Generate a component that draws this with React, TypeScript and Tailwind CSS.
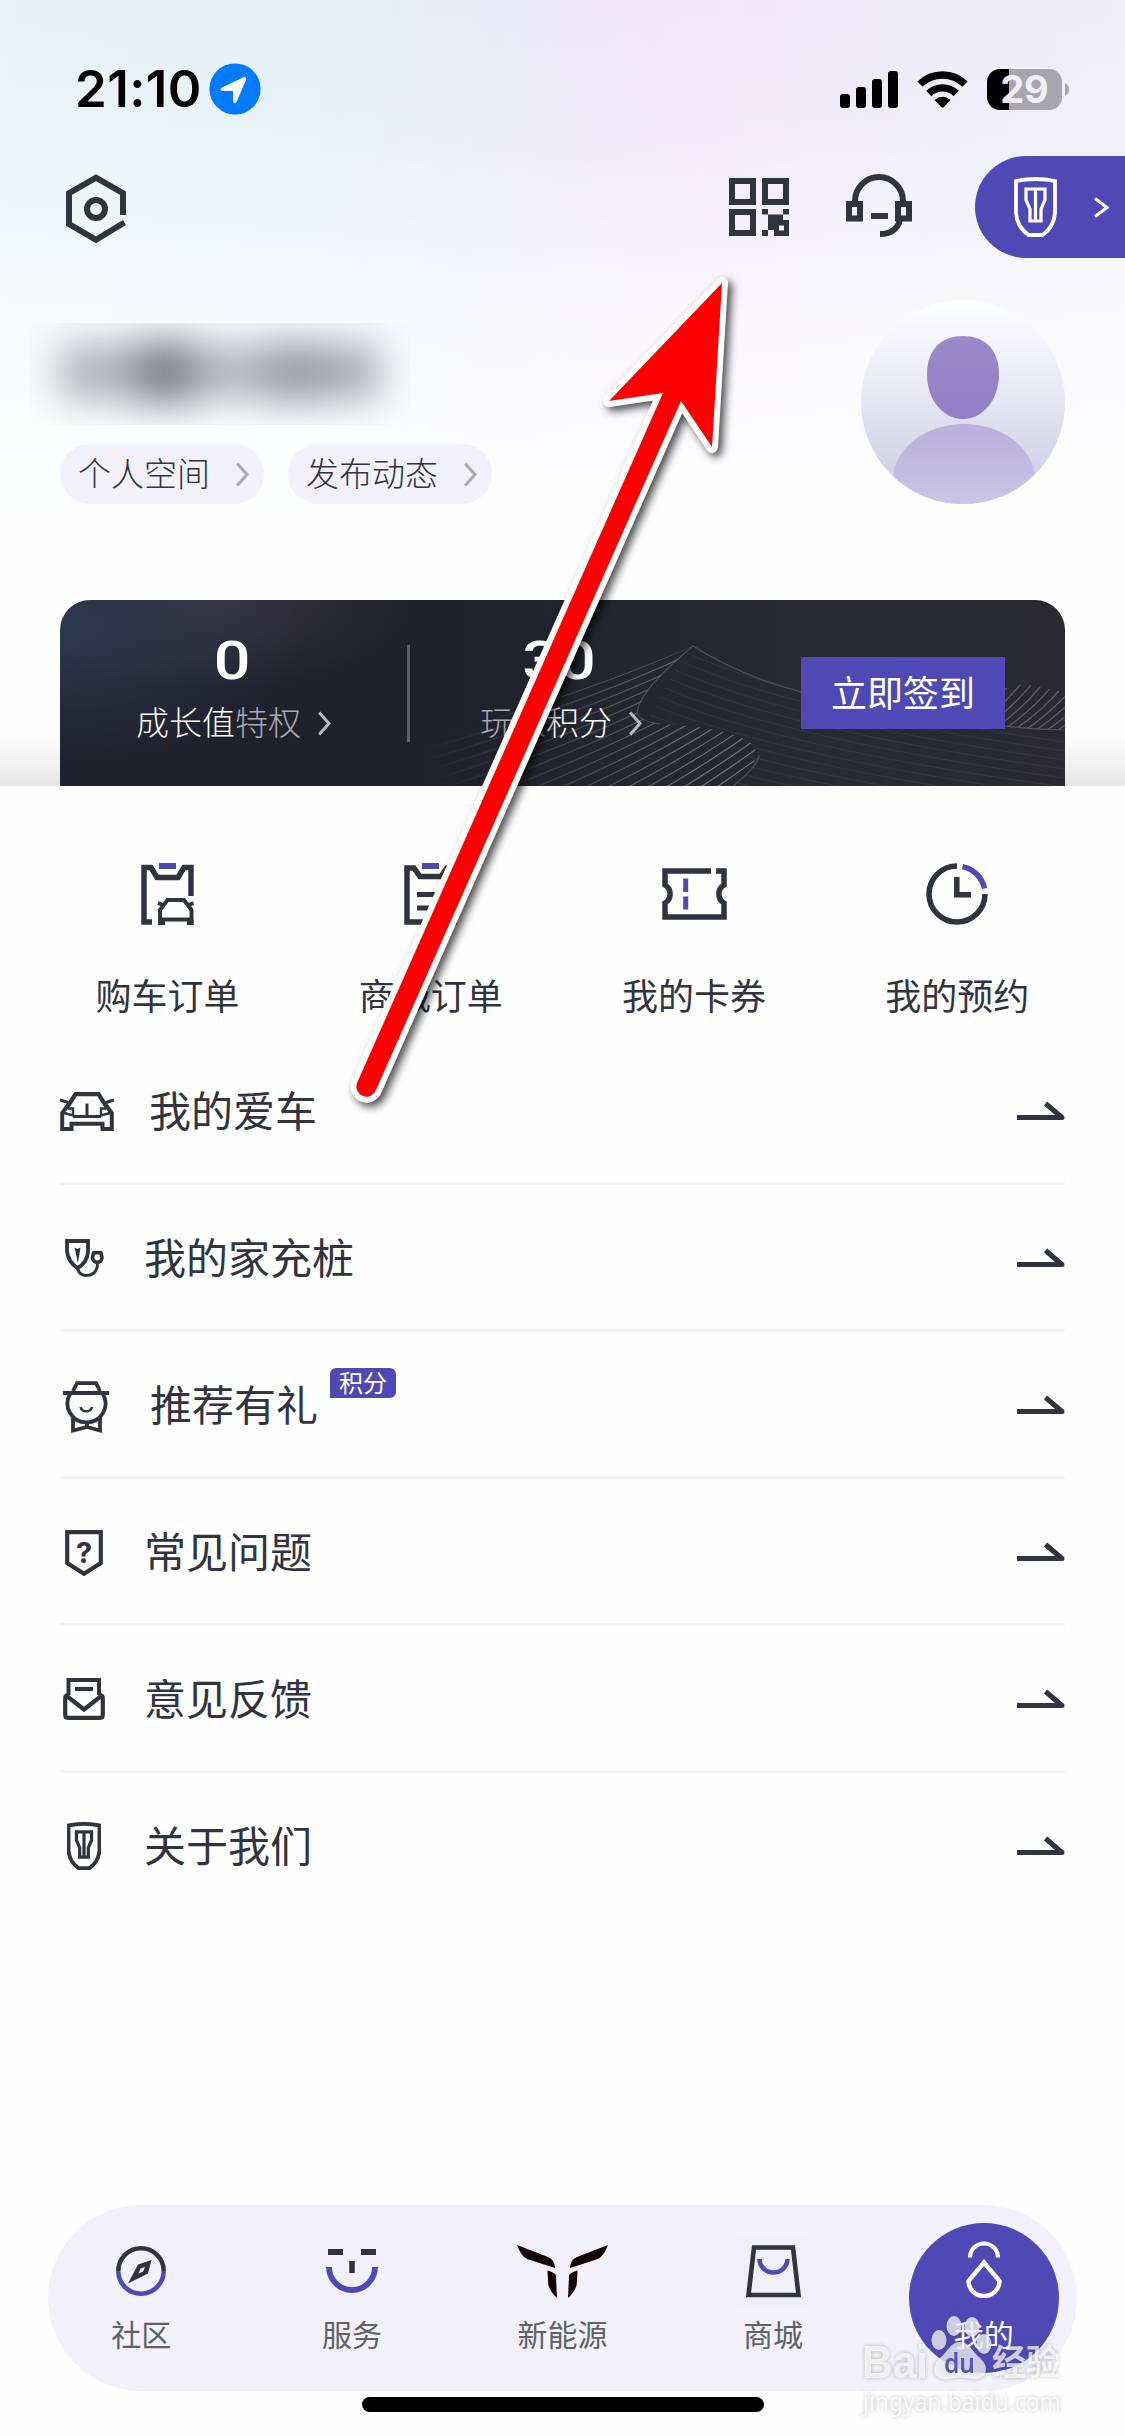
import React from "react";

const INK = "#31333e";
const VIOLET = "#4f49b5";

function Svg({ w, h, className, children }: { w: number; h: number; className?: string; children: React.ReactNode }) {
  return (
    <svg width={w} height={h} viewBox={`0 0 ${w} ${h}`} fill="none" className={className ?? "shrink-0"}>
      {children}
    </svg>
  );
}

/* ---------- status bar ---------- */

function StatusBar() {
  return (
    <div className="flex h-[156px] items-start justify-between pt-[63px] pl-[75px] pr-[56px]">
      <div className="flex h-[52px] items-center">
        <span className="w-[134px] font-['Inter'] text-[51px] font-semibold leading-[52px] tracking-[0.4px] text-black">21:10</span>
        <Svg w={52} h={52}>
          <circle cx="26" cy="26" r="25.6" fill="#007aff" />
          <path d="M13 24.5 L34 14.5 Q38 13 37 17 L27.5 39 Q25 42 24 38 V28 H14 Q9.500 27 13 24.500Z" fill="#fff" />
        </Svg>
      </div>
      <div className="flex h-[52px] items-center">
        <Svg w={58} h={37}>
          <rect x="0" y="23" width="10" height="14" rx="3" fill="#000" />
          <rect x="16" y="16" width="10" height="21" rx="3" fill="#000" />
          <rect x="32" y="8" width="10" height="29" rx="3" fill="#000" />
          <rect x="48" y="0" width="10" height="37" rx="3" fill="#000" />
        </Svg>
        <Svg w={51} h={37} className="ml-[19px] shrink-0">
          <path d="M3 13.200 A32 32 0 0 1 48 13.200" stroke="#000" strokeWidth="7.400" />
          <path d="M11.800 22.500 A19.500 19.500 0 0 1 39.200 22.500" stroke="#000" strokeWidth="7.400" />
          <path d="M17.500 29 Q25.500 22.500 33.500 29 L26.500 36.300 Q25.500 37.200 24.500 36.300Z" fill="#000" />
        </Svg>
        <div className="ml-[19px] flex h-[41px] w-[75px] items-center justify-center rounded-[13px] bg-[linear-gradient(90deg,#000_29.5%,#a7a5ad_29.5%)]">
          <span className="font-['Inter'] text-[38px] font-bold leading-none text-[#f1eefb]">29</span>
        </div>
        <Svg w={4} h={13} className="ml-[3px] shrink-0">
          <path d="M0 0 Q4 2 4 6.500 Q4 11 0 13Z" fill="#a7a5ad" />
        </Svg>
      </div>
    </div>
  );
}

/* ---------- header ---------- */

function Shield({ w, h, color, width }: { w: number; h: number; color: string; width: number }) {
  return (
    <svg width={w} height={h} viewBox="0 0 43 60" fill="none" stroke={color} strokeWidth={width} className="shrink-0">
      <path d="M2 4 Q21.500 0 41 4 V36 Q40 50 28.500 58 H14.500 Q3 50 2 36Z" />
      <path d="M12 12 H31 V23 L27 32 V44 H16 V32 L12 23Z M21.500 12 V44" strokeWidth={width * 0.85} />
    </svg>
  );
}

function Header() {
  return (
    <div className="flex h-[102px] items-center pl-[66px]">
      <Svg w={60} h={70} className="mt-[3px] shrink-0">
        <path d="M57 41 V19.200 L30 3.600 L3 19.200 V50 L30 65.800 L58.500 48.500" stroke={INK} strokeWidth="6" />
        <circle cx="30" cy="35" r="9" stroke={INK} strokeWidth="6" />
      </Svg>
      <Svg w={60} h={58} className="ml-[603px] shrink-0">
        <path d="M3 3H24V24H3Z M36 3H57V24H36Z M3 34H24V55H3Z" stroke={INK} strokeWidth="6" />
        <path
          fillRule="evenodd"
          fill={INK}
          d="M33 31h6v5.500h-6z M54 31h6v5.500h-6z M39 36.500h15v5.500h-9v10h-6z M45 42h15v16h-15z M50 47.500v5h5v-5z M33 52h6v6h-6z"
        />
      </Svg>
      <Svg w={66} h={63} className="mb-[3px] ml-[57px] shrink-0">
        <path d="M9 28 V27 A24 24 0 0 1 57 27 V28" stroke={INK} strokeWidth="6" />
        <path d="M3 30H14V44.500H3Z M52 30H63V44.500H52Z" stroke={INK} strokeWidth="6" />
        <path d="M25 42 H42" stroke={INK} strokeWidth="6" />
        <path d="M54 46 Q50 60 34 60" stroke={INK} strokeWidth="6" />
      </Svg>
      <div className="ml-[63px] flex h-[102px] w-[150px] items-center rounded-l-full bg-[#4f49b5] pl-[39px]">
        <Shield w={43} h={60} color="#fff" width={3.8} />
        <Svg w={15} h={21} className="ml-[37px] shrink-0">
          <path d="M1 1.500 L13 10.500 L1 19.500" stroke="#fff" strokeWidth="3" />
        </Svg>
      </div>
    </div>
  );
}

function Chevron({ color }: { color: string }) {
  return (
    <Svg w={13} h={25}>
      <path d="M1.200 1.500 L11 12.500 L1.200 23.500" stroke={color} strokeWidth="3" />
    </Svg>
  );
}

function Chip({ label }: { label: string }) {
  return (
    <div className="flex h-[60px] w-[204px] items-center justify-between rounded-full bg-[#f2f0fb] pl-[18px] pr-[15px]">
      <span className="pb-1 text-[33px] font-light leading-none text-[#31333e]">{label}</span>
      <Chevron color="#aaaaaf" />
    </div>
  );
}

function Profile() {
  return (
    <div className="mt-[42px] flex h-[204px] justify-between pr-[60px] pl-[30px]">
      <div className="flex flex-col pt-[23px]">
        <div className="flex h-[102px] w-[380px] items-start overflow-hidden pt-[20px] pl-[30px]">
          <div className="flex h-[58px] items-center blur-[19px]">
            <div className="h-[56px] w-[75px] bg-[#b0b3b7]" />
            <div className="h-[62px] w-[60px] bg-[#7d8087]" />
            <div className="h-[54px] w-[70px] bg-[#b3b5b9]" />
            <div className="h-[58px] w-[60px] bg-[#989aa3]" />
            <div className="h-[54px] w-[54px] bg-[#a8a9ae]" />
          </div>
        </div>
        <div className="mt-[19px] ml-[30px] flex gap-6">
          <Chip label="个人空间" />
          <Chip label="发布动态" />
        </div>
      </div>
      <svg width="204" height="204" viewBox="0 0 204 204">
        <defs>
          <linearGradient id="avatarBg" x1="0" y1="0" x2="0" y2="1">
            <stop offset="0" stopColor="#fdfeff" />
            <stop offset="0.350" stopColor="#ededf6" />
            <stop offset="1" stopColor="#cbc8e4" />
          </linearGradient>
          <linearGradient id="avatarBody" x1="0" y1="0" x2="0" y2="1">
            <stop offset="0" stopColor="#b8afdb" />
            <stop offset="1" stopColor="#cbc5e7" />
          </linearGradient>
          <linearGradient id="avatarHead" x1="0" y1="0" x2="0" y2="1">
            <stop offset="0" stopColor="#9a8bcb" />
            <stop offset="1" stopColor="#9180c6" />
          </linearGradient>
          <clipPath id="avatarClip">
            <circle cx="102" cy="102" r="102" />
          </clipPath>
        </defs>
        <g clipPath="url(#avatarClip)">
          <rect width="204" height="204" fill="url(#avatarBg)" />
          <path d="M32 204 V180 A71 56 0 0 1 174 180 V204Z" fill="url(#avatarBody)" />
          <path d="M66 74 C66 48 82 36 102 36 C122 36 138 48 138 74 C138 100 122 119 102 119 C82 119 66 100 66 74Z" fill="url(#avatarHead)" />
        </g>
      </svg>
    </div>
  );
}

/* ---------- membership card ---------- */

const range = (n: number) => Array.from({ length: n }, (_, i) => i);

function Contours() {
  return (
    <svg width="1005" height="186" viewBox="0 0 1005 186" fill="none" className="absolute inset-0">
      <defs>
        <clipPath id="duneLeft">
          <path d="M330 150 Q520 95 633 46 Q580 90 577 112 Q578 121 600 124 Q660 126 690 142 Q708 158 673 186 H330Z" />
        </clipPath>
        <clipPath id="duneMain">
          <path d="M633 46 Q700 88 780 100 Q900 128 1005 130 V186 H673 Q708 158 690 142 Q660 126 600 124 Q578 121 577 112 Q580 90 633 46Z" />
        </clipPath>
        <clipPath id="duneRight">
          <path d="M870 116 Q930 90 965 84 L1005 92 V130 Q920 126 870 116Z" />
        </clipPath>
        <linearGradient id="fadeIn" gradientUnits="userSpaceOnUse" x1="360" y1="0" x2="640" y2="0">
          <stop offset="0" stopColor="#8a8a8c" stopOpacity="0" />
          <stop offset="0.500" stopColor="#8a8a8c" stopOpacity="0.300" />
          <stop offset="1" stopColor="#9a9893" stopOpacity="0.650" />
        </linearGradient>
      </defs>
      <g clipPath="url(#duneLeft)" stroke="url(#fadeIn)" strokeWidth="1.200">
        {range(26).map((i) => (
          <path key={i} d={`M${330 + i * 6} ${148 + i * 9.5} Q${520 + i * 6} ${98 + i * 7.5} ${640 + i * 7} ${42 + i * 4}`} />
        ))}
      </g>
      <g clipPath="url(#duneMain)" stroke="#77777a" strokeOpacity="0.160" strokeWidth="1.200">
        {range(18).map((i) => (
          <path key={i} d={`M${625 - i * 5} ${52 + i * 9} Q${740 - i * 2} ${105 + i * 9} 1005 ${142 + i * 9}`} />
        ))}
      </g>
      <g clipPath="url(#duneRight)" stroke="#8c8a86" strokeOpacity="0.600" strokeWidth="1.200">
        {range(14).map((i) => (
          <path key={i} d={`M${860 + i * 11} 134 Q${895 + i * 11} 112 ${920 + i * 11} 80`} />
        ))}
      </g>
      <path d="M633 46 Q580 90 577 112 Q578 121 600 124 M699 155 Q699 165 673 186 M633 46 Q700 88 790 102 M880 118 Q940 128 1005 130" stroke="#85837f" strokeOpacity="0.450" strokeWidth="1.200" />
    </svg>
  );
}

function Stat({ value, strong, soft, softFirst }: { value: string; strong: string; soft: string; softFirst?: boolean }) {
  const softText = <span className="text-[#aaa9ae]">{soft}</span>;
  return (
    <div className="flex flex-col items-center">
      <span className="mr-[3px] scale-x-[1.22] font-['Roboto'] text-[53px] font-medium leading-[62px] text-white">{value}</span>
      <div className="mt-[8px] flex items-center gap-[17px] text-[33px] font-light leading-[42px] text-white">
        <span>
          {softFirst && softText}
          {strong}
          {!softFirst && softText}
        </span>
        <div className="pt-[5px]">
          <Chevron color="#b9b9bd" />
        </div>
      </div>
    </div>
  );
}

function MemberCard() {
  return (
    <div className="bg-[linear-gradient(180deg,transparent_72%,#e6e6e6_100%)] px-[60px]">
      <div className="relative h-[186px] overflow-hidden rounded-t-[30px] bg-[radial-gradient(ellipse_240px_130px_at_0px_30px,#2d3850_0%,transparent_100%),radial-gradient(ellipse_200px_90px_at_150px_0px,#3a3443_0%,transparent_100%),linear-gradient(90deg,#1f212e_0%,#1f222d_40%,#292a33_75%,#2a2a30_100%)]">
        <Contours />
        <div className="relative flex h-full items-start">
          <div className="flex w-[347px] justify-center pt-[30px]">
            <Stat value="0" strong="成长值" soft="特权" />
          </div>
          <div className="mt-[45px] h-[97px] w-[3px] bg-[#5f6068]" />
          <div className="flex w-[302px] justify-center pt-[30px]">
            <Stat value="30" strong="积分" soft="玩家" softFirst />
          </div>
          <button className="mt-[57px] ml-[89px] h-[72px] w-[204px] bg-[#4f49b5] pb-1 text-[36px] leading-none text-white">立即签到</button>
        </div>
      </div>
    </div>
  );
}

/* ---------- shortcuts ---------- */

const CarOrderIcon = (
  <Svg w={53} h={62}>
    <rect x="18" y="0" width="17" height="6" fill={VIOLET} />
    <path d="M11 59 H3 V4.500 H10 L16 14.500 H37 L43 4.500 H50 V33" stroke={INK} strokeWidth="5.500" />
    <path d="M19 62 V47 L26.500 37 H43 L50.500 47 V62 M19 56.500 H50.500 M17 40 L22 42 M52.500 40 L47.500 42" stroke={INK} strokeWidth="4" />
    <path d="M17 56.500H24V62H17Z M46 56.500H52.500V62H46Z" fill={INK} />
  </Svg>
);

const MallOrderIcon = (
  <Svg w={53} h={62}>
    <rect x="18" y="0" width="17" height="6" fill={VIOLET} />
    <path d="M3 59 V5 H10 L16 13.500 H37 L43 5 H50 V59Z" stroke={INK} strokeWidth="5.500" />
    <path d="M13 31.500 H40 M13 45 H40" stroke={INK} strokeWidth="5" />
  </Svg>
);

const CouponIcon = (
  <Svg w={65} h={52}>
    <path d="M49 3 H3 V17 A10.500 10.500 0 0 1 3 35 V49 H62 V35 A10.500 10.500 0 0 1 62 17 V3 H54" stroke={INK} strokeWidth="5.500" />
    <path d="M23.700 10.500 V24 M23.700 28.500 V41.500" stroke={VIOLET} strokeWidth="5" />
  </Svg>
);

const ClockIcon = (
  <Svg w={62} h={62}>
    <path d="M59 31 A28 28 0 1 1 31 3" stroke={INK} strokeWidth="5.500" />
    <path d="M36.500 3.600 A28 28 0 0 1 58.500 25.500" stroke={VIOLET} strokeWidth="5.500" />
    <path d="M30.800 14 V31.800 H45" stroke={INK} strokeWidth="5.500" />
  </Svg>
);

const shortcuts = [
  { label: "购车订单", icon: CarOrderIcon },
  { label: "商城订单", icon: MallOrderIcon },
  { label: "我的卡券", icon: CouponIcon },
  { label: "我的预约", icon: ClockIcon },
];

function Shortcuts() {
  return (
    <div className="grid h-[252px] grid-cols-4 px-9 pt-[69px]">
      {shortcuts.map((s) => (
        <div key={s.label} className="flex flex-col items-center">
          <div className="flex h-[78px] items-center">{s.icon}</div>
          <span className="mt-[35px] text-[36px] leading-[52px] text-[#31333e]">{s.label}</span>
        </div>
      ))}
    </div>
  );
}

/* ---------- menu ---------- */

const CarIcon = (
  <Svg w={54} h={39}>
    <path d="M8 14 L15.500 2.200 H38.500 L46 14" stroke={INK} strokeWidth="4.200" />
    <path d="M0 8 L8 10.500 M54 8 L46 10.500 M27 11.500 V24 M13 24.500 H41" stroke={INK} strokeWidth="3" />
    <path d="M9 12 L2.200 21 V37 H11.500 V31.800 H42.500 V37 H51.800 V21 L45 12" stroke={INK} strokeWidth="4" />
    <path d="M4 21 L13 23.500 V16.500 H8 M50 21 L41 23.500 V16.500 H46" stroke={INK} strokeWidth="2.400" />
  </Svg>
);

const ChargerIcon = (
  <Svg w={39} h={38}>
    <path d="M2 2 H23 V13 Q22 24 12.500 29 Q3 23 2 12Z" stroke={INK} strokeWidth="3.800" />
    <path d="M9.500 8.500 L12.500 10 L15.500 8.500 L13 24Z" fill={INK} />
    <path d="M12.500 29 Q14 36.500 21.500 36.500 Q32 36 32.500 25" stroke={INK} strokeWidth="3" />
    <path d="M28.500 13.800 H36 L37 18.500 A4.700 4.700 0 0 1 27.500 18.500Z" stroke={INK} strokeWidth="3.600" strokeLinejoin="round" />
  </Svg>
);

const ReferralIcon = (
  <Svg w={46} h={52}>
    <path d="M10 10 L14 2.200 H33 L37 10" stroke={INK} strokeWidth="3.800" />
    <path d="M0 12 H46" stroke={INK} strokeWidth="4.200" />
    <path d="M7 13 A19 19 0 1 0 40 13" stroke={INK} strokeWidth="3.800" />
    <path d="M17.500 26 A6 6 0 0 0 29 26" stroke={INK} strokeWidth="2.600" />
    <path d="M10 35 V49.500 L24 46 L37 49.500 V35 M24 41 V46" stroke={INK} strokeWidth="3.800" />
  </Svg>
);

const FaqIcon = (
  <Svg w={38} h={47}>
    <path d="M2.200 2.200 H35.800 V33 L19 43.700 L2.200 33Z" stroke={INK} strokeWidth="4.200" />
    <text x="19" y="32.500" textAnchor="middle" fontFamily="Inter" fontWeight="700" fontSize="29" fill={INK}>
      ?
    </text>
  </Svg>
);

const FeedbackIcon = (
  <Svg w={42} h={42}>
    <path d="M5.500 17 V2 H36 V17" stroke={INK} strokeWidth="4" />
    <path d="M12 11 H30" stroke={INK} strokeWidth="4.200" />
    <path d="M2.500 17 L21 31.500 L39.500 17" stroke={INK} strokeWidth="4.200" />
    <path d="M6 17 Q2.200 17 2.200 20 V37 Q2.200 39.800 5 39.800 H37 Q39.800 39.800 39.800 37 V20 Q39.800 17 36 17" stroke={INK} strokeWidth="4.200" />
  </Svg>
);

const menu = [
  { label: "我的爱车", icon: CarIcon, slot: "w-[54px]", gap: "ml-[35px]" },
  { label: "我的家充桩", icon: ChargerIcon, slot: "w-[48px]", gap: "ml-[36px]" },
  { label: "推荐有礼", icon: ReferralIcon, slot: "w-[52px] pt-[4px]", gap: "ml-[38px]", badge: "积分" },
  { label: "常见问题", icon: FaqIcon, slot: "w-[48px] pt-[2px]", gap: "ml-[36px]" },
  { label: "意见反馈", icon: FeedbackIcon, slot: "w-[48px]", gap: "ml-[36px]" },
  { label: "关于我们", icon: <Shield w={34} h={48} color={INK} width={4.8} />, slot: "w-[48px]", gap: "ml-[36px]" },
];

function Menu() {
  return (
    <div className="flex flex-col px-[60px]">
      {menu.map((m, i) => (
        <div
          key={m.label}
          className={`flex h-[147px] items-center ${i < menu.length - 1 ? "border-b-[3px] border-[#f3f3f4]" : "border-b-[3px] border-transparent"}`}
        >
          <div className={`mt-[2px] flex justify-center ${m.slot}`}>{m.icon}</div>
          <span className={`pb-[3px] text-[42px] leading-none text-[#31333e] ${m.gap}`}>{m.label}</span>
          {m.badge && (
            <span className="mb-[43px] ml-[12px] flex h-[30px] w-[66px] items-center justify-center rounded-[6px] rounded-bl-none bg-[#4f49b5] pb-[2px] text-[24px] leading-none text-white">
              {m.badge}
            </span>
          )}
          <Svg w={48} h={20} className="mt-[2px] ml-auto shrink-0">
            <path d="M0 16.500 H45 L28.500 2.500" stroke={INK} strokeWidth="5" strokeLinejoin="round" />
          </Svg>
        </div>
      ))}
    </div>
  );
}

/* ---------- tab bar ---------- */

const CompassIcon = (
  <Svg w={50} h={50}>
    <path d="M2.300 25 A22.700 22.700 0 0 1 47.700 25" stroke={INK} strokeWidth="4.500" />
    <path d="M2.300 25 A22.700 22.700 0 0 0 47.700 25" stroke={VIOLET} strokeWidth="4.500" />
    <path fillRule="evenodd" d="M35.500 14 L32 27.500 L12 37.500 L22 18.500Z M29 21 L24.500 22.500 L22.500 27.500 L27 25.500Z" fill={INK} />
  </Svg>
);

const ServiceIcon = (
  <Svg w={52} h={44}>
    <path d="M2 3 H17 M35 3 H50" stroke={INK} strokeWidth="6" />
    <path d="M26 12 V24" stroke={INK} strokeWidth="5.500" />
    <path d="M3 18 A23 23 0 0 0 49 18" stroke={VIOLET} strokeWidth="5.800" />
  </Svg>
);

const EnergyIcon = (
  <Svg w={91} h={53}>
    <path d="M0 0 L31 12 Q38 15 38 23 L10 14 Q4 11 0 0Z M91 0 L60 12 Q53 15 53 23 L81 14 Q87 11 91 0Z M30.500 25.500 Q39 28 39 31 L40 53 Q31 45 31 36Z M60.500 25.500 Q52 28 52 31 L51 53 Q60 45 60 36Z" fill="#120405" />
  </Svg>
);

const MallIcon = (
  <div className="flex h-[72px] w-[72px] items-center justify-center bg-[#f0eff8]">
    <Svg w={55} h={53}>
      <path d="M8 2.500 H47 L52.500 50 H2.500Z" stroke={INK} strokeWidth="4.600" />
      <path d="M13.500 14 A14 13.500 0 0 0 41.500 14" stroke={VIOLET} strokeWidth="4.500" />
    </Svg>
  </div>
);

const MeIcon = (
  <Svg w={36} h={57}>
    <path d="M4 16.500 A14 14 0 0 1 32 16.500" stroke="#fff" strokeWidth="4.200" />
    <path d="M18 21.500 L2.500 40 A15.500 15 0 0 0 33.500 40Z" stroke="#fff" strokeWidth="4.400" />
  </Svg>
);

const tabs = [
  { label: "社区", icon: CompassIcon },
  { label: "服务", icon: ServiceIcon },
  { label: "新能源", icon: EnergyIcon },
  { label: "商城", icon: MallIcon },
];

function TabBar() {
  return (
    <div className="mx-[48px] h-[186px] rounded-full bg-[#f2f0fa]">
      <div className="-mx-3 grid h-full grid-cols-5">
        {tabs.map((t) => (
          <div key={t.label} className="flex flex-col items-center pt-[30px]">
            <div className="flex h-[72px] items-center">{t.icon}</div>
            <span className="mt-1.5 text-[30px] leading-10 text-[#5f6168]">{t.label}</span>
          </div>
        ))}
        <div className="flex justify-center pt-[18px]">
          <div className="flex h-[150px] w-[150px] flex-col items-center rounded-full bg-[#4f49b5] pt-[18px]">
            {MeIcon}
            <span className="mt-[15px] text-[30px] leading-10 text-white">我的</span>
          </div>
        </div>
      </div>
    </div>
  );
}

/* ---------- overlays ---------- */

function PointerArrow() {
  return (
    <svg width="420" height="860" viewBox="330 260 420 860" className="absolute top-[260px] left-[330px] drop-shadow-[4px_4px_4px_rgba(0,0,0,0.7)]">
      <path
        d="M722 283 L609 401 L663 393 L357 1083 A10 10 0 0 0 376 1090 L681 401 L712 447Z"
        fill="#ff0000"
        stroke="#ffffff"
        strokeWidth="12"
        strokeLinejoin="round"
        paintOrder="stroke"
      />
    </svg>
  );
}

function Watermark() {
  return (
    <svg width="220" height="116" viewBox="0 0 220 116" className="absolute top-[2312px] left-[860px] drop-shadow-[0_0_2px_rgba(80,80,90,0.5)]">
      <g fill="#ffffff" fillOpacity="0.720">
        <ellipse cx="79" cy="28" rx="7.500" ry="10" />
        <ellipse cx="94" cy="14" rx="7.500" ry="10" />
        <ellipse cx="112" cy="15" rx="7.500" ry="10" />
        <ellipse cx="124" cy="32" rx="7.500" ry="10" />
        <path d="M100 30 C110 30 112 40 120 46 C132 57 124 69 112 67 Q100 64 89 67 C75 69 69 57 80 46 C88 40 90 30 100 30Z" />
        <text x="2" y="66" fontFamily="Liberation Sans" fontWeight="700" fontSize="47" textLength="66" lengthAdjust="spacingAndGlyphs">
          Bai
        </text>
        <text x="132" y="63" fontFamily="Noto Sans CJK SC" fontWeight="700" fontSize="35" textLength="68" lengthAdjust="spacingAndGlyphs">
          经验
        </text>
        <text x="3" y="99" fontFamily="Noto Sans" fontSize="25" textLength="198" lengthAdjust="spacingAndGlyphs">
          jingyan.baidu.com
        </text>
      </g>
      <text x="84" y="61" fontFamily="Noto Sans" fontWeight="600" fontSize="27" fill="#5a54b9" textLength="31" lengthAdjust="spacingAndGlyphs">
        du
      </text>
    </svg>
  );
}

export default function App() {
  return (
    <div className="relative flex h-[2436px] w-[1125px] flex-col overflow-hidden bg-[#fefefe] font-['Noto_Sans_CJK_SC',sans-serif]">
      <div className="bg-[linear-gradient(180deg,transparent_0px,rgba(255,255,255,0.2)_150px,rgba(255,255,255,0.65)_310px,#fefefe_540px),linear-gradient(90deg,#e6f2f5_0%,#e4eff5_28%,#ebe7f8_50%,#efe6fa_62%,#ecebf7_85%,#efeef7_100%)]">
        <StatusBar />
        <Header />
        <Profile />
        <div className="h-24" />
        <MemberCard />
      </div>
      <Shortcuts />
      <Menu />
      <div className="mt-auto mb-6">
        <TabBar />
        <div className="mx-auto mt-1.5 h-[15px] w-[402px] rounded-full bg-black" />
      </div>
      <PointerArrow />
      <Watermark />
    </div>
  );
}
